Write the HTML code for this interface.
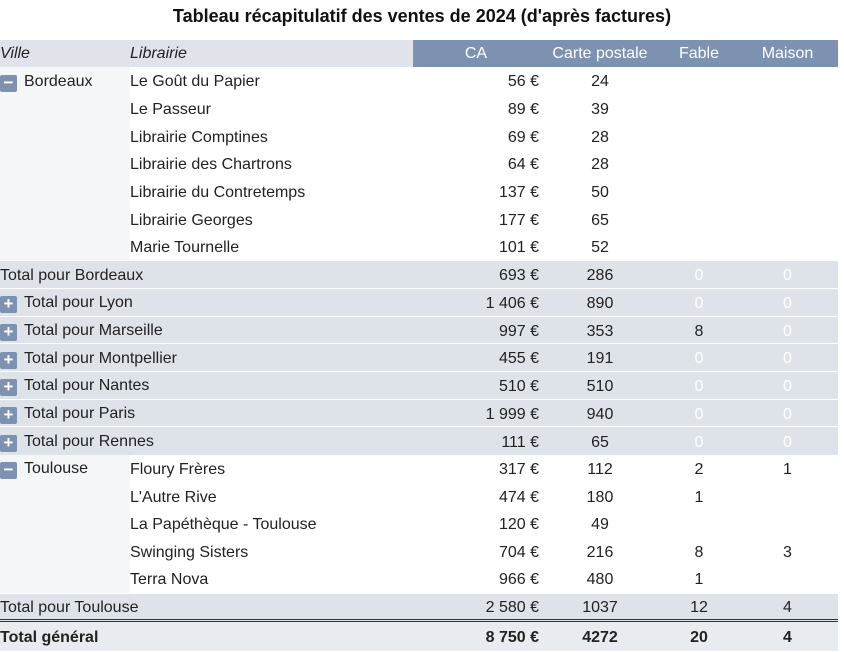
<!DOCTYPE html>
<html><head><meta charset="utf-8"><style>
body{margin:0;width:844px;height:652px;background:#fff;font-family:"Liberation Sans",Arial,sans-serif;color:#222;overflow:hidden;position:relative}
h1{position:absolute;top:6px;left:0;width:844px;text-align:center;font-size:18px;font-weight:bold;margin:0;color:#111}
table{position:absolute;top:40px;left:0;border-collapse:collapse;font-size:16px;table-layout:fixed;width:838px}
td,th{padding:3px 0 0 0;height:27.7px;white-space:nowrap;font-weight:normal;box-sizing:border-box}
th{height:27px;padding-top:1px}
.hl{background:#e0e4ea;font-style:italic;text-align:left}
.hb{background:#7d91b1;color:#fff;text-align:center}
.v{background:#f5f6f8}
.tot td{background:#dee2e9;border-top:1px solid #fff}
.r{text-align:right}.c{text-align:center}
.z{color:#fff}
.ic{display:inline-block;width:17px;height:17px;border-radius:2px;background:#7d91b1;color:#fff;font-weight:bold;text-align:center;line-height:16px;font-size:17px;vertical-align:-2px;margin-right:7px}
.gt td{font-weight:bold;background:#e8ebf0;border-top:3px double #333;height:30px}
</style></head><body>
<h1>Tableau récapitulatif des ventes de 2024 (d'après factures)</h1>
<table>
<colgroup><col style="width:130px"><col style="width:283px"><col style="width:126px"><col style="width:122px"><col style="width:76px"><col style="width:101px"></colgroup>
<tr><th class="hl">Ville</th><th class="hl">Librairie</th><th class="hb">CA</th><th class="hb">Carte postale</th><th class="hb">Fable</th><th class="hb">Maison</th></tr>
<tr><td class="v"><span class="ic">−</span>Bordeaux</td><td>Le Goût du Papier</td><td class="r">56 €</td><td class="c">24</td><td></td><td></td></tr>
<tr><td class="v"></td><td>Le Passeur</td><td class="r">89 €</td><td class="c">39</td><td></td><td></td></tr>
<tr><td class="v"></td><td>Librairie Comptines</td><td class="r">69 €</td><td class="c">28</td><td></td><td></td></tr>
<tr><td class="v"></td><td>Librairie des Chartrons</td><td class="r">64 €</td><td class="c">28</td><td></td><td></td></tr>
<tr><td class="v"></td><td>Librairie du Contretemps</td><td class="r">137 €</td><td class="c">50</td><td></td><td></td></tr>
<tr><td class="v"></td><td>Librairie Georges</td><td class="r">177 €</td><td class="c">65</td><td></td><td></td></tr>
<tr><td class="v"></td><td>Marie Tournelle</td><td class="r">101 €</td><td class="c">52</td><td></td><td></td></tr>
<tr class="tot"><td colspan="2">Total pour Bordeaux</td><td class="r">693 €</td><td class="c">286</td><td class="c z">0</td><td class="c z">0</td></tr>
<tr class="tot"><td colspan="2"><span class="ic">+</span>Total pour Lyon</td><td class="r">1 406 €</td><td class="c">890</td><td class="c z">0</td><td class="c z">0</td></tr>
<tr class="tot"><td colspan="2"><span class="ic">+</span>Total pour Marseille</td><td class="r">997 €</td><td class="c">353</td><td class="c">8</td><td class="c z">0</td></tr>
<tr class="tot"><td colspan="2"><span class="ic">+</span>Total pour Montpellier</td><td class="r">455 €</td><td class="c">191</td><td class="c z">0</td><td class="c z">0</td></tr>
<tr class="tot"><td colspan="2"><span class="ic">+</span>Total pour Nantes</td><td class="r">510 €</td><td class="c">510</td><td class="c z">0</td><td class="c z">0</td></tr>
<tr class="tot"><td colspan="2"><span class="ic">+</span>Total pour Paris</td><td class="r">1 999 €</td><td class="c">940</td><td class="c z">0</td><td class="c z">0</td></tr>
<tr class="tot"><td colspan="2"><span class="ic">+</span>Total pour Rennes</td><td class="r">111 €</td><td class="c">65</td><td class="c z">0</td><td class="c z">0</td></tr>
<tr><td class="v"><span class="ic">−</span>Toulouse</td><td>Floury Frères</td><td class="r">317 €</td><td class="c">112</td><td class="c">2</td><td class="c">1</td></tr>
<tr><td class="v"></td><td>L'Autre Rive</td><td class="r">474 €</td><td class="c">180</td><td class="c">1</td><td></td></tr>
<tr><td class="v"></td><td>La Papéthèque - Toulouse</td><td class="r">120 €</td><td class="c">49</td><td></td><td></td></tr>
<tr><td class="v"></td><td>Swinging Sisters</td><td class="r">704 €</td><td class="c">216</td><td class="c">8</td><td class="c">3</td></tr>
<tr><td class="v"></td><td>Terra Nova</td><td class="r">966 €</td><td class="c">480</td><td class="c">1</td><td></td></tr>
<tr class="tot"><td colspan="2">Total pour Toulouse</td><td class="r">2 580 €</td><td class="c">1037</td><td class="c">12</td><td class="c">4</td></tr>
<tr class="gt"><td colspan="2">Total général</td><td class="r">8 750 €</td><td class="c">4272</td><td class="c">20</td><td class="c">4</td></tr>
</table>
</body></html>
